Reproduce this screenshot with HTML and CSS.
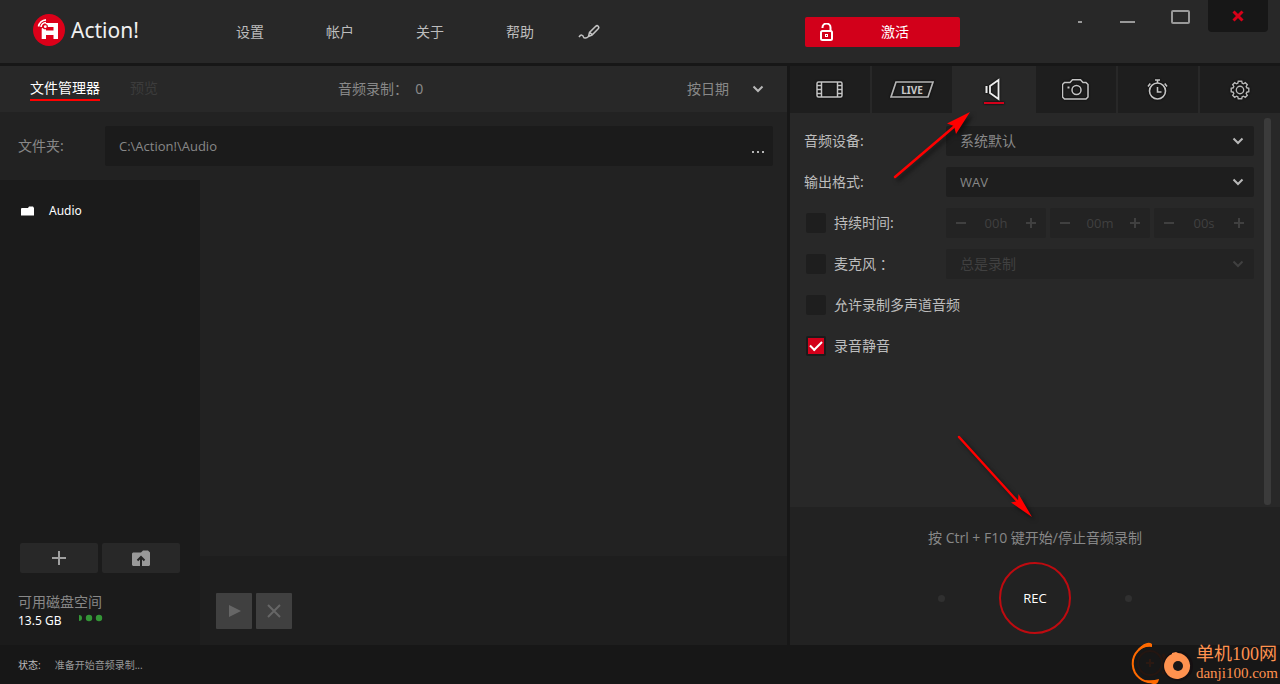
FILE: index.html
```html
<!DOCTYPE html>
<html lang="zh-CN">
<head>
<meta charset="utf-8">
<meta name="viewport" content="width=device-width, initial-scale=1">
<title>Action!</title>
<link rel="stylesheet" href="styles.css">
</head>
<body>
<svg class="defs" aria-hidden="true">
  <symbol id="chevron" viewBox="0 0 12 8"><path d="M1.500 1.500 6 6 10.500 1.500" fill="none" stroke="currentColor" stroke-width="2"/></symbol>
  <symbol id="minus" viewBox="0 0 12 12"><path d="M1 6h10" fill="none" stroke="currentColor" stroke-width="2"/></symbol>
  <symbol id="plus" viewBox="0 0 12 12"><path d="M1 6h10M6 1v10" fill="none" stroke="currentColor" stroke-width="2"/></symbol>
</svg>
<div class="app">
  <header class="topbar">
    <div class="brand">
      <svg width="32" height="32" viewBox="0 0 32 32" aria-hidden="true">
        <circle cx="16" cy="16" r="16" fill="#dc0019"/>
        <path fill="#fff" fill-rule="evenodd" d="M12.500 9H25v16h-4.500v-4H13v4H8.700V14.500l3.800-2zM13 13v3.500h7.500V13z"/>
        <circle cx="12.300" cy="12.700" r="2.600" fill="#dc0019"/><circle cx="12.300" cy="12.700" r="1.400" fill="#fff"/>
        <path d="M5.500 12.500a8 8 0 0 1 7.500-6.700M8 13a5 5 0 0 1 5-4.500" fill="none" stroke="#fff" stroke-width="1.700"/>
      </svg>
      <span>Action!</span>
    </div>
    <nav class="menu">
      <a href="#settings">设置</a>
      <a href="#account">帐户</a>
      <a href="#about">关于</a>
      <a href="#help">帮助</a>
      <a class="draw" href="#draw" aria-label="draw">
        <svg width="22" height="16" viewBox="0 0 22 16" fill="none" stroke="#c4c4c4" stroke-width="1.500"><path d="M1 13c2-3 4-2 4.500 0 .5 1.500 3 1.500 5-.5M10.500 12.500l1-4 6-6c1-1 2-1 2.700-.3s.8 1.800-.2 2.800l-6 6zM12 8.500l2.500 2.500"/></svg>
      </a>
    </nav>
    <button class="activate" type="button">
      <svg width="14" height="19" viewBox="0 0 14 19" fill="none" stroke="#fff" stroke-width="2"><rect x="1" y="8" width="11" height="9" rx="1.500"/><path d="M2.500 5V4.500a4 4 0 0 1 8 0V8"/><rect x="5.500" y="11.500" width="2" height="2" stroke-width="1"/></svg>
      <span>激活</span>
    </button>
    <div class="window-controls">
      <button type="button" aria-label="compact"><svg width="20" height="16" viewBox="0 0 20 16"><path d="M8 14h4" stroke="#999" stroke-width="2"/></svg></button>
      <button type="button" aria-label="minimize"><svg width="20" height="16" viewBox="0 0 20 16"><path d="M0 14h15" stroke="#999" stroke-width="2"/></svg></button>
      <button type="button" aria-label="maximize"><svg width="20" height="16" viewBox="0 0 20 16"><rect x="2" y="3" width="17" height="12" rx="1" fill="none" stroke="#999" stroke-width="2"/></svg></button>
      <button class="close" type="button" aria-label="close"><svg width="12" height="12" viewBox="0 0 12 12"><path d="M1.500 1.500l9 9M10.500 1.500l-9 9" stroke="#d80018" stroke-width="3"/></svg></button>
    </div>
  </header>

  <main class="main">
    <section class="files">
      <div class="file-tabs">
        <button class="file-tab active" type="button">文件管理器</button>
        <button class="file-tab" type="button" disabled>预览</button>
        <span class="count">音频录制：&nbsp; 0</span>
        <button class="sort" type="button">按日期 <svg class="chevron" width="12" height="8"><use href="#chevron"/></svg></button>
      </div>
      <div class="folder-row">
        <label for="folder">文件夹:</label>
        <div class="path-box">
          <input id="folder" type="text" value="C:\Action!\Audio">
          <button type="button" aria-label="browse"><svg width="14" height="4" viewBox="0 0 14 4" fill="#b5b5b5"><path d="M0 1h2v2H0zM5 1h2v2H5zM10 1h2v2h-2z"/></svg></button>
        </div>
      </div>
      <div class="browser">
        <aside class="sidebar">
          <a class="folder" href="#audio"><svg width="13" height="10" viewBox="0 0 13 10"><path fill="#fff" d="M1 2h6l1-1.500h4L13 2v7.500H0V2.500z"/></svg>Audio</a>
          <div class="folder-actions">
            <button type="button" aria-label="add folder"><svg width="14" height="14" viewBox="0 0 14 14"><path d="M0 7h14M7 0v14" stroke="#a0a0a0" stroke-width="2"/></svg></button>
            <button type="button" aria-label="open folder"><svg width="18" height="16" viewBox="0 0 18 16"><path fill="#999" d="M0 3.500 1 2.500h8L11 .5h5l2 2V15l-1 1H1l-1-1z"/><path d="M9 16V8M5.500 10.500 9 7l3.500 3.500" stroke="#242424" stroke-width="2" fill="none"/></svg></button>
          </div>
          <div class="disk">
            <span class="disk-label">可用磁盘空间</span>
            <div class="disk-value">13.5 GB <svg width="24" height="12" viewBox="0 0 24 12" fill="#349637"><path d="M0 3a3 3 0 0 1 0 6z"/><circle cx="10" cy="6" r="3.200"/><circle cx="20" cy="6" r="3.200"/></svg></div>
          </div>
        </aside>
        <div class="content">
          <div class="file-list"></div>
          <div class="playbar">
            <button type="button" disabled aria-label="play"><svg width="14" height="14" viewBox="0 0 14 14"><path fill="#666" d="M2 1l12 6-12 6z"/></svg></button>
            <button type="button" disabled aria-label="delete"><svg width="14" height="14" viewBox="0 0 14 14"><path d="M1 1l12 12M13 1 1 13" stroke="#666" stroke-width="2"/></svg></button>
          </div>
        </div>
      </div>
    </section>

    <section class="record">
      <nav class="modes">
        <button type="button" aria-label="video"><svg width="28" height="18" viewBox="0 0 28 18" fill="none" stroke="#c4c4c4" stroke-width="1.500"><rect x="1" y="1" width="25" height="15" rx="1.500"/><path d="M5.500 1v15M21.500 1v15M1 4.500h4.500M1 8.500h4.500M1 12.500h4.500M21.500 4.500H26M21.500 8.500H26M21.500 12.500H26"/></svg></button>
        <button type="button" aria-label="live"><span class="live"><svg width="44" height="18" viewBox="0 0 44 18" fill="none" stroke="#b5b5b5" stroke-width="1.700"><path d="M6 1h37l-5 15H1z"/></svg><b>LIVE</b></span></button>
        <button class="active" type="button" aria-label="audio"><svg width="20" height="30" viewBox="0 0 20 30" fill="none" stroke="#eee"><path d="M14.500 5v19L6 18v-7z" stroke-width="1.800"/><path d="M2.500 11v7" stroke-width="2"/><path d="M0 28h20" stroke="#d2001a" stroke-width="2"/></svg></button>
        <button type="button" aria-label="screenshot"><svg width="28" height="22" viewBox="0 0 28 22" fill="none" stroke="#c4c4c4" stroke-width="1.500"><path d="M2.500 3.500H8L10.500.8h8L21 3.500h3l2 2V18l-2 2H2.500l-2-2V5.500z"/><circle cx="14.500" cy="11" r="4.500"/><path d="M5.500 8.500h2" stroke-width="2"/></svg></button>
        <button type="button" aria-label="timer"><svg width="22" height="22" viewBox="0 0 22 22" fill="none" stroke="#c4c4c4" stroke-width="1.600"><circle cx="10.500" cy="12" r="8"/><path d="M8 1h5M10.500 1v3M1 7.500l2.300-3M20 7.500l-2.300-3M10.500 8v5h4"/></svg></button>
        <button type="button" aria-label="preferences"><svg width="20" height="20" viewBox="0 0 20 20" fill="none" stroke="#b8b8b8" stroke-width="1.400"><path d="M8.300 1.200h3.400l.5 2 1.300.6 1.800-1.100 2 2-1.100 1.800.6 1.300 2 .5v3.400l-2 .5-.6 1.300 1.100 1.800-2 2-1.800-1.100-1.300.6-.5 2H8.300l-.5-2-1.300-.6-1.800 1.100-2-2 1.100-1.800-.6-1.300-2-.5V8.300l2-.5.6-1.300-1.100-1.800 2-2 1.800 1.100 1.300-.6z"/><circle cx="10" cy="10" r="3.700"/></svg></button>
      </nav>
      <div class="options-scroll">
        <form class="options">
          <div class="row"><label for="device">音频设备:</label>
            <div class="select"><select id="device"><option>系统默认</option></select><svg class="chevron" width="12" height="8"><use href="#chevron"/></svg></div></div>
          <div class="row"><label for="format">输出格式:</label>
            <div class="select"><select id="format"><option>WAV</option></select><svg class="chevron" width="12" height="8"><use href="#chevron"/></svg></div></div>
          <div class="row"><label class="check"><input type="checkbox">持续时间:</label>
            <div class="steppers">
              <div class="stepper"><button type="button" disabled aria-label="fewer hours"><svg width="12" height="12"><use href="#minus"/></svg></button><input type="text" value="00h" disabled aria-label="hours"><button type="button" disabled aria-label="more hours"><svg width="12" height="12"><use href="#plus"/></svg></button></div>
              <div class="stepper"><button type="button" disabled aria-label="fewer minutes"><svg width="12" height="12"><use href="#minus"/></svg></button><input type="text" value="00m" disabled aria-label="minutes"><button type="button" disabled aria-label="more minutes"><svg width="12" height="12"><use href="#plus"/></svg></button></div>
              <div class="stepper"><button type="button" disabled aria-label="fewer seconds"><svg width="12" height="12"><use href="#minus"/></svg></button><input type="text" value="00s" disabled aria-label="seconds"><button type="button" disabled aria-label="more seconds"><svg width="12" height="12"><use href="#plus"/></svg></button></div>
            </div></div>
          <div class="row"><label class="check"><input type="checkbox">麦克风 ：</label>
            <div class="select disabled"><select disabled aria-label="麦克风"><option>总是录制</option></select><svg class="chevron" width="12" height="8"><use href="#chevron"/></svg></div></div>
          <div class="row wide"><label class="check"><input type="checkbox">允许录制多声道音频</label></div>
          <div class="row wide"><label class="check"><input type="checkbox" checked>录音静音</label></div>
        </form>
        <div class="scrollbar"></div>
      </div>
      <div class="rec-panel">
        <p>按 Ctrl + F10 键开始/停止音频录制</p>
        <div class="rec-row"><i class="dot"></i><button class="rec" type="button">REC</button><i class="dot"></i></div>
      </div>
    </section>
  </main>

  <footer class="status"><span class="status-label">状态:</span><span>准备开始音频录制...</span></footer>

  <svg class="arrow arrow-tab" width="90" height="80" viewBox="0 0 90 80"><path d="M5 71 66 19" stroke="#f00" stroke-width="2.500" stroke-linecap="round"/><path fill="#f00" d="M80 6 57 17.500 64 20l2 8z"/></svg>
  <svg class="arrow arrow-rec" width="90" height="94" viewBox="0 0 90 94"><path d="M9 7 69 73" stroke="#f00" stroke-width="2.500" stroke-linecap="round"/><path fill="#f00" d="M82 87 61 72.500l7-1.500.5-7z"/></svg>

  <div class="watermark">
    <svg width="66" height="42" viewBox="0 0 66 42" fill="none">
      <path d="M22 3A18.600 18.600 0 1 0 24 40" stroke="#ff6a00" stroke-width="2"/>
      <path fill="#ff6a00" d="M8 7Q17-2 22 2v3Q14 4 8 9zM14 38q9 1 15-1-1 6-6 5z"/>
      <circle cx="20" cy="21" r="12" stroke="#241611" stroke-width="2"/><path d="M20 17v8M16 21h8" stroke="#2b1912" stroke-width="2"/>
      <path d="M33 12q5 10 0 20" stroke="#251610" stroke-width="3"/>
      <circle cx="48" cy="24" r="15" fill="#151012"/><path fill="#ff924f" d="M42 11l4-1 2 1a13 13 0 1 1-6 1z"/>
      <circle cx="48" cy="24" r="5" fill="#1a1717"/>
    </svg>
    <div class="watermark-text"><span class="site">单机100网</span><span class="domain">danji100.com</span></div>
  </div>
</div>
</body>
</html>
```
FILE: styles.css
```css
* { box-sizing: border-box; }
body {
  margin: 0;
  background: #171717;
  color: #bdbdbd;
  font: 14px/20px "Noto Sans", "Noto Sans CJK SC", sans-serif;
}
button, input, select { font: inherit; color: inherit; border: 0; padding: 0; margin: 0; background: none; border-radius: 0; min-width: 0; }
button { display: flex; align-items: center; justify-content: center; }
a { color: inherit; text-decoration: none; }
svg { display: block; flex: none; }
p { margin: 0; }
.defs { position: absolute; width: 0; height: 0; }
.app { position: relative; min-height: 100vh; display: flex; flex-direction: column; overflow: hidden; }

.topbar { height: 63px; background: #282828; display: flex; align-items: flex-start; margin-bottom: 3px; }
.brand { display: flex; align-items: center; gap: 6px; padding: 14px 0 0 33px; width: 205px; color: #f0f0f0; font-size: 21px; line-height: 32px; }
.menu { display: flex; padding-top: 22px; }
.menu a { display: flex; align-items: center; justify-content: center; width: 90px; height: 20px; }
.menu .draw { width: 48px; }
.activate { width: 155px; height: 30px; margin: 17px 0 0 auto; background: #d2001a; color: #fff; border-radius: 2px; justify-content: flex-start; padding-left: 15px; }
.activate span { flex: 1; padding-right: 4px; }
.window-controls { display: flex; align-items: flex-start; margin: 0 12px 0 95px; }
.window-controls button { width: 50px; height: 32px; }
.window-controls .close { width: 60px; margin-left: 3px; background: #171717; border-radius: 0 0 4px 4px; }

.main { flex: 1; display: flex; gap: 3px; }
.files { flex: 1; min-width: 0; display: flex; flex-direction: column; background: #222; }
.file-tabs { height: 46px; background: #282828; display: flex; align-items: center; padding: 0 23px 0 30px; color: #888; }
.file-tab { height: 24px; border-bottom: 2px solid transparent; margin-right: 30px; }
.file-tab.active { color: #fff; border-color: #f00; }
.file-tab:disabled { color: #3c3c3c; }
.count { margin-left: 150px; }
.sort { margin-left: auto; gap: 23px; }
.chevron { color: #b8b8b8; }
.folder-row { height: 68px; display: flex; align-items: center; padding: 0 14px 0 18px; color: #888; }
.folder-row label { width: 87px; }
.path-box { flex: 1; display: flex; height: 40px; background: #1b1b1b; border-radius: 2px; padding: 0 7px 0 14px; }
.path-box input { flex: 1; font-family: "Open Sans", sans-serif; font-size: 13px; }
.path-box button { padding-top: 12px; }
.browser { flex: 1; display: flex; }
.sidebar { width: 200px; background: #1b1b1b; display: flex; flex-direction: column; padding-top: 21px; }
.folder { display: flex; align-items: center; gap: 15px; padding-left: 21px; color: #fff; font-size: 12px; }
.folder-actions { margin-top: auto; display: flex; gap: 4px; padding: 0 20px; }
.folder-actions button { flex: 1; height: 30px; background: #282828; border-radius: 2px; }
.disk { padding: 19px 18px 15px; color: #888; }
.disk-label { display: block; }
.disk-value { display: flex; gap: 18px; align-items: flex-start; font-size: 12px; line-height: 18px; color: #fff; }
.content { flex: 1; display: flex; flex-direction: column; }
.file-list { flex: 1; }
.playbar { height: 89px; background: #1e1e1e; display: flex; gap: 4px; padding: 37px 16px 0; }
.playbar button { width: 36px; height: 36px; background: #404040; border-radius: 1px; }

.record { width: 490px; display: flex; flex-direction: column; background: #282828; }
.modes { display: flex; gap: 2px; height: 47px; }
.modes button { flex: 1; background: #1e1e1e; }
.modes .active { background: none; }
.modes svg { filter: drop-shadow(0 0 1px #000); }
.live { display: grid; place-items: center; }
.live > * { grid-area: 1 / 1; }
.live b { font-size: 10px; line-height: 18px; color: #c8c8c8; }
.options-scroll { flex: 1; display: flex; padding: 5px 9px 2px 14px; }
.options { flex: 1; display: flex; flex-direction: column; gap: 11px; padding: 8px 10px 0 0; }
.row { display: grid; grid-template-columns: 142px 1fr; height: 30px; align-items: center; }
.wide { grid-template-columns: 1fr; }
.check { display: flex; align-items: center; gap: 8px; padding-left: 2px; }
.check input { appearance: none; width: 20px; height: 20px; background: #1e1e1e; border-radius: 2px; display: grid; place-items: center; }
.check input:checked { background: #d2001a; border: 2px solid #1b1b1b; }
.check input:checked::before { content: ""; width: 10px; height: 5px; margin-bottom: 3px; border: solid #fff; border-width: 0 0 2px 2px; transform: rotate(-45deg); }
.select { display: grid; align-items: center; height: 30px; background: #1e1e1e; border-radius: 2px; color: #888; }
.select > * { grid-area: 1 / 1; }
.select select { appearance: none; width: 100%; height: 30px; padding: 0 36px 0 14px; opacity: 1; }
.select .chevron { justify-self: end; margin-right: 10px; pointer-events: none; }
#format, .stepper input, .rec { font-family: "Open Sans", sans-serif; font-size: 13px; }
.disabled, .disabled .chevron { background-color: #232323; color: #404040; }
.steppers { display: flex; gap: 4px; }
.stepper { flex: 1; display: flex; height: 30px; background: #232323; border-radius: 2px; color: #404040; }
.stepper button { width: 30px; }
.stepper input { flex: 1; width: 40px; text-align: center; }
.scrollbar { width: 7px; background: #3b3b3b; border-radius: 3px; }
.rec-panel { height: 138px; background: #222; display: flex; flex-direction: column; align-items: center; color: #888; padding-top: 21px; }
.rec-panel p { font-family: "Open Sans", "Noto Sans CJK SC", sans-serif; }
.rec-row { display: flex; align-items: center; gap: 54px; margin-top: 14px; }
.dot { width: 7px; height: 7px; border-radius: 50%; background: #303030; }
.rec { width: 72px; height: 72px; border: 2px solid #be0b10; border-radius: 50%; color: #fff; }

.status { height: 39px; display: flex; align-items: center; gap: 14px; padding: 0 18px; font-size: 10px; color: #999; }
.status-label { color: #bdbdbd; }

.arrow { position: absolute; fill: none; filter: drop-shadow(3px 3px 2px #111); pointer-events: none; }
.arrow-tab { left: 890px; top: 106px; }
.arrow-rec { left: 950px; top: 430px; }
.watermark { position: absolute; right: 2px; bottom: 0; display: flex; align-items: center; color: #ff924f; }
.watermark-text { display: flex; flex-direction: column; }
.site { font: 18px/20px "Liberation Serif", "Noto Sans CJK SC", serif; }
.domain { font: 15px/18px "Liberation Serif", serif; }
```
